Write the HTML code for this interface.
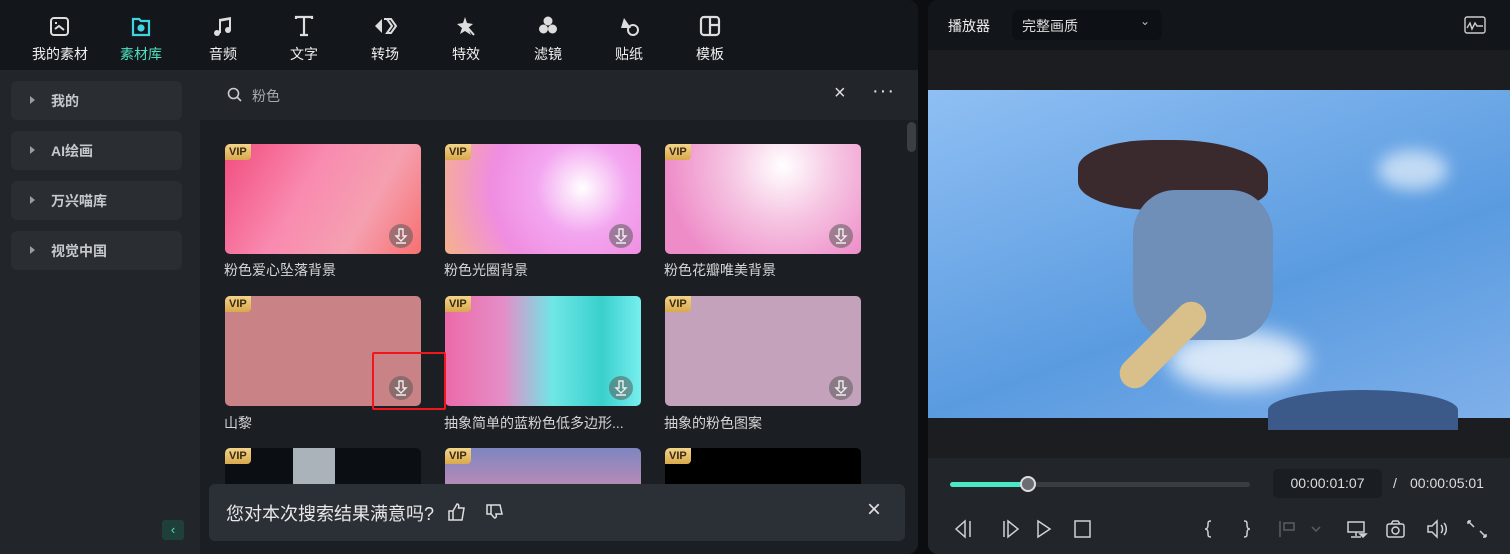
<!DOCTYPE html>
<html><head><meta charset="utf-8"><style>
*{margin:0;padding:0;box-sizing:border-box}
body{width:1510px;height:554px;background:#0b0d10;font-family:"Liberation Sans","Noto Sans CJK SC",sans-serif;color:#e6e8ea;position:relative;overflow:hidden;font-size:14px}
.abs{position:absolute}
#left{left:0;top:0;width:918px;height:554px;background:#1b1e22;border-radius:0 10px 10px 0;overflow:hidden}
#top{left:0;top:0;width:918px;height:70px;background:#13171c}
.tab{position:absolute;top:13px;width:80px;text-align:center;font-size:14px;color:#f0f0f0}
.tab svg{display:block;margin:0 auto 5px;width:26px;height:26px}
#side{left:0;top:70px;width:200px;height:484px;background:#22262b}
.si{position:absolute;left:11px;width:171px;height:39px;background:#2a2e33;border-radius:6px;font-size:14px;font-weight:bold;color:#c6c9cc;padding:10px 0 0 40px}
.si:before{content:"";position:absolute;left:19px;top:15px;border-left:5px solid #9a9da0;border-top:4px solid transparent;border-bottom:4px solid transparent}
#search{left:200px;top:70px;width:718px;height:50px;background:#22262b}
.card{position:absolute;width:196px;height:110px;border-radius:5px;overflow:hidden}
.vip{position:absolute;left:0;top:0;background:linear-gradient(#f3d48a,#d9a94c);color:#3a2a10;font-size:11px;font-weight:bold;padding:2px 4px;border-radius:4px 0 4px 0}
.dl{position:absolute;right:8px;bottom:6px;width:24px;height:24px;border-radius:12px;background:rgba(90,90,90,.55)}
.dl:after{content:"";position:absolute}
.lbl{position:absolute;font-size:14px;color:#d4d6d8}
#right{left:928px;top:0;width:582px;height:554px;background:#1b1d20;border-radius:10px 0 0 10px;overflow:hidden}
</style></head><body>
<svg width="0" height="0" style="position:absolute"><defs><symbol id="dl" viewBox="0 0 24 24"><path d="M10 5h4v7h3l-5 5-5-5h3zM7 19h10" fill="none" stroke="#eee" stroke-width="1.4"/></symbol></defs></svg>
<div id="left" class="abs">
 <div id="top" class="abs">
  <div class="tab" style="left:20px"><svg viewBox="0 0 26 26" fill="none" stroke="#ddd" stroke-width="2"><rect x="4" y="5" width="17" height="17" rx="3"/><path d="M8 16l4-3 5 4M8 10h2"/></svg>我的素材</div>
  <div class="tab" style="left:101px;color:#4fe0c0"><svg viewBox="0 0 26 26" fill="none" stroke="#3fd5e0" stroke-width="2.2"><path d="M5 6h6l2 2h8v14H5z"/><circle cx="13" cy="15" r="2.5" fill="#3fd5e0"/></svg>素材库</div>
  <div class="tab" style="left:183px"><svg viewBox="0 0 26 26" fill="#ddd"><path d="M9 6l12-2v13h-2V7l-8 1.5V20h-2V6z"/><circle cx="7" cy="20" r="3"/><circle cx="18" cy="17" r="3"/></svg>音频</div>
  <div class="tab" style="left:264px"><svg viewBox="0 0 26 26" fill="none" stroke="#ddd" stroke-width="2.2"><path d="M5 6V4h16v2M13 4v18M9 22h8"/></svg>文字</div>
  <div class="tab" style="left:345px"><svg viewBox="0 0 26 26" fill="#ddd"><path d="M3 13l7-7v14z"/><path d="M12 6h7l5 7-5 7h-4l5-7-5-7" fill="none" stroke="#ddd" stroke-width="2"/></svg>转场</div>
  <div class="tab" style="left:426px"><svg viewBox="0 0 26 26" fill="#ddd"><path d="M12 4l2 6 6 1-5 4 3 7-6-4-5 3 2-6-5-4 6-1z"/><path d="M15 15l6 7" stroke="#ddd" stroke-width="2"/></svg>特效</div>
  <div class="tab" style="left:508px"><svg viewBox="0 0 26 26" fill="#ddd"><circle cx="13" cy="8" r="4.5"/><circle cx="8.5" cy="16" r="4.5"/><circle cx="17.5" cy="16" r="4.5"/></svg>滤镜</div>
  <div class="tab" style="left:589px"><svg viewBox="0 0 26 26" fill="#ddd"><path d="M8 5l7 10H5z"/><circle cx="17" cy="17" r="5" fill="none" stroke="#ddd" stroke-width="2"/></svg>贴纸</div>
  <div class="tab" style="left:670px"><svg viewBox="0 0 26 26" fill="none" stroke="#ddd" stroke-width="2.2"><rect x="4" y="4" width="18" height="18" rx="3"/><path d="M13 4v18M13 12h9"/></svg>模板</div>
 </div>
 <div id="side" class="abs">
  <div class="si" style="top:11px">我的</div>
  <div class="si" style="top:61px">AI绘画</div>
  <div class="si" style="top:111px">万兴喵库</div>
  <div class="si" style="top:161px">视觉中国</div>
  <div class="abs" style="left:162px;top:450px;width:22px;height:20px;background:#1f3f3a;border-radius:3px;color:#4fe0c0;font-size:13px;text-align:center;line-height:20px">‹</div>
 </div>
 <div id="search" class="abs">
  <svg class="abs" style="left:27px;top:17px" width="16" height="16" viewBox="0 0 16 16" fill="none" stroke="#ccc" stroke-width="1.6"><circle cx="6.5" cy="6.5" r="5"/><path d="M10 10l4 4"/></svg>
  <div class="abs" style="left:52px;top:16px;color:#a8abae">粉色</div>
  <div class="abs" style="left:634px;top:12px;font-size:20px;color:#ddd">×</div>
  <div class="abs" style="left:672px;top:10px;font-size:20px;color:#ddd;letter-spacing:1px">···</div>
 </div>
 <div class="abs" style="left:907px;top:122px;width:9px;height:30px;background:#3b3f44;border-radius:5px"></div>

 <div class="card" style="left:225px;top:144px;background:linear-gradient(120deg,#f24d7e,#f98ab0 40%,#f5a0b0 70%,#f77070)"><div class="vip">VIP</div><svg class="dl"><use href="#dl"/></svg></div>
 <div class="card" style="left:445px;top:144px;background:radial-gradient(circle at 70% 40%,#fff 0,#f3a6f0 30%,#f08de0 60%,#f6b28a)"><div class="vip">VIP</div><svg class="dl"><use href="#dl"/></svg></div>
 <div class="card" style="left:665px;top:144px;background:radial-gradient(circle at 60% 20%,#fff 0,#f6c7e3 35%,#ee8cc8 80%)"><div class="vip">VIP</div><svg class="dl"><use href="#dl"/></svg></div>
 <div class="lbl" style="left:224px;top:260px">粉色爱心坠落背景</div>
 <div class="lbl" style="left:444px;top:260px">粉色光圈背景</div>
 <div class="lbl" style="left:664px;top:260px">粉色花瓣唯美背景</div>

 <div class="card" style="left:225px;top:296px;background:#c98286"><div class="vip">VIP</div><svg class="dl"><use href="#dl"/></svg></div>
 <div class="card" style="left:445px;top:296px;background:linear-gradient(90deg,#ec6aa8,#e48ec8 30%,#6fe6e6 55%,#39d0cc 80%,#7ee)"><div class="vip">VIP</div><svg class="dl"><use href="#dl"/></svg></div>
 <div class="card" style="left:665px;top:296px;background:#c4a2bc"><div class="vip">VIP</div><svg class="dl"><use href="#dl"/></svg></div>
 <div class="abs" style="left:372px;top:352px;width:74px;height:58px;border:2px solid #f0171c;border-radius:2px"></div>
 <div class="lbl" style="left:224px;top:413px">山黎</div>
 <div class="lbl" style="left:444px;top:413px">抽象简单的蓝粉色低多边形...</div>
 <div class="lbl" style="left:664px;top:413px">抽象的粉色图案</div>

 <div class="card" style="left:225px;top:448px;height:36px;border-radius:5px 5px 0 0;background:#0b0e12"><div class="abs" style="left:68px;top:0;width:42px;height:40px;background:#aab2ba"></div><div class="vip">VIP</div></div>
 <div class="card" style="left:445px;top:448px;height:36px;border-radius:5px 5px 0 0;background:linear-gradient(#7d86c0,#b58ab8)"><div class="vip">VIP</div></div>
 <div class="card" style="left:665px;top:448px;height:36px;border-radius:5px 5px 0 0;background:#000"><div class="vip">VIP</div></div>

 <div class="abs" style="left:209px;top:484px;width:696px;height:57px;background:#2b3036;border-radius:6px">
  <div class="abs" style="left:17px;top:16px;font-size:18px;color:#e8e8e8">您对本次搜索结果满意吗?</div>
  <svg class="abs" style="left:238px;top:18px" width="20" height="20" viewBox="0 0 20 20" fill="none" stroke="#ddd" stroke-width="1.5"><path d="M2 9h4v9H2zM6 9l4-7c2 0 2 2 1.5 4H17l-2 12H6"/></svg>
  <svg class="abs" style="left:275px;top:19px" width="20" height="20" viewBox="0 0 20 20" fill="none" stroke="#ddd" stroke-width="1.5"><path d="M3 2h4v9H3zM7 2h9l2 9h-6c.5 2 .5 4-1.5 4L7 11"/></svg>
  <div class="abs" style="left:658px;top:12px;font-size:24px;color:#ddd">×</div>
 </div>
</div>

<div id="right" class="abs">
 <div class="abs" style="left:0;top:0;width:582px;height:50px;background:#12161b">
  <div class="abs" style="left:20px;top:16px;color:#eee">播放器</div>
  <div class="abs" style="left:84px;top:10px;width:150px;height:30px;background:#0d1014;border-radius:6px;padding:6px 0 0 10px;color:#ddd">完整画质<span class="abs" style="left:128px;top:4px;font-size:12px;color:#bbb">⌄</span></div>
  <svg class="abs" style="left:536px;top:16px" width="22" height="18" viewBox="0 0 22 18" fill="none" stroke="#ccc" stroke-width="1.4"><rect x="1" y="1" width="20" height="16" rx="2"/><path d="M3 12l3-5 2 6 3-6 2 3h6"/></svg>
 </div>
 <div class="abs" style="left:0;top:90px;width:582px;height:328px;background:linear-gradient(160deg,#8fbff3,#5a9be0 60%,#7fb0ea)">
  <div class="abs" style="left:450px;top:60px;width:70px;height:40px;background:rgba(255,255,255,.6);border-radius:50%;filter:blur(8px)"></div>
  <div class="abs" style="left:240px;top:240px;width:140px;height:60px;background:rgba(255,255,255,.75);border-radius:50%;filter:blur(10px)"></div>
  <div class="abs" style="left:340px;top:300px;width:190px;height:40px;background:#3b5a8a;border-radius:50% 50% 0 0"></div>
  <div class="abs" style="left:150px;top:50px;width:190px;height:70px;background:#3a2a2e;border-radius:40% 50% 30% 40%"></div>
  <div class="abs" style="left:205px;top:100px;width:140px;height:150px;background:#6f8eb8;border-radius:30%"></div>
  <div class="abs" style="left:180px;top:240px;width:110px;height:30px;background:#d9c08a;border-radius:15px;transform:rotate(-45deg)"></div>
 </div>
 <div class="abs" style="left:0;top:458px;width:582px;height:96px;background:#22262b">
  <div class="abs" style="left:22px;top:24px;width:300px;height:5px;background:#383d44;border-radius:3px"></div>
  <div class="abs" style="left:22px;top:24px;width:78px;height:5px;background:#4be8c8;border-radius:3px"></div>
  <div class="abs" style="left:92px;top:18px;width:16px;height:16px;border-radius:8px;background:#6a6e74;border:2px solid #ddd"></div>
  <div class="abs" style="left:345px;top:11px;width:109px;height:29px;background:#1a1d21;border-radius:5px;color:#ddd;text-align:center;padding-top:6px">00:00:01:07</div>
  <div class="abs" style="left:465px;top:17px;color:#ddd">/</div>
  <div class="abs" style="left:482px;top:17px;color:#ddd">00:00:05:01</div>
  <svg class="abs" style="left:22px;top:60px" width="540" height="22" viewBox="0 0 540 22" fill="none" stroke="#d0d2d4" stroke-width="1.5">
   <path d="M15 3L6 11l9 8zM20 3v16"/>
   <path d="M54 3v16M58 3l10 8-10 8z"/>
   <path d="M88 3l12 8-12 8z"/>
   <rect x="125" y="3" width="15" height="16"/>
   <path d="M261 3c-3 0-3 1-3 4s-1 4-3 4c2 0 3 1 3 4s0 4 3 4M294 3c3 0 3 1 3 4s1 4 3 4c-2 0-3 1-3 4s0 4-3 4"/>
   <g stroke="#5a5e63"><path d="M330 3v16M334 5h10v7h-10zM362 9l4 4 4-4"/></g>
   <path d="M398 4h16v10h-16zM406 14v4M401 19h10"/><path d="M410 16h6l-3 3z" fill="#d0d2d4"/>
   <rect x="437" y="6" width="17" height="13" rx="2"/><circle cx="445.5" cy="12.5" r="3.5"/><path d="M441 6l2-3h5l2 3"/>
   <path d="M478 8h4l5-5v16l-5-5h-4zM491 7c2 2 2 6 0 8M494 5c3 3 3 9 0 12"/>
   <path d="M518 3l6 6M518 3h3M518 3v3M536 19l-6-6M536 19h-3M536 19v-3"/>
  </svg>
 </div>
</div>
</body></html>
